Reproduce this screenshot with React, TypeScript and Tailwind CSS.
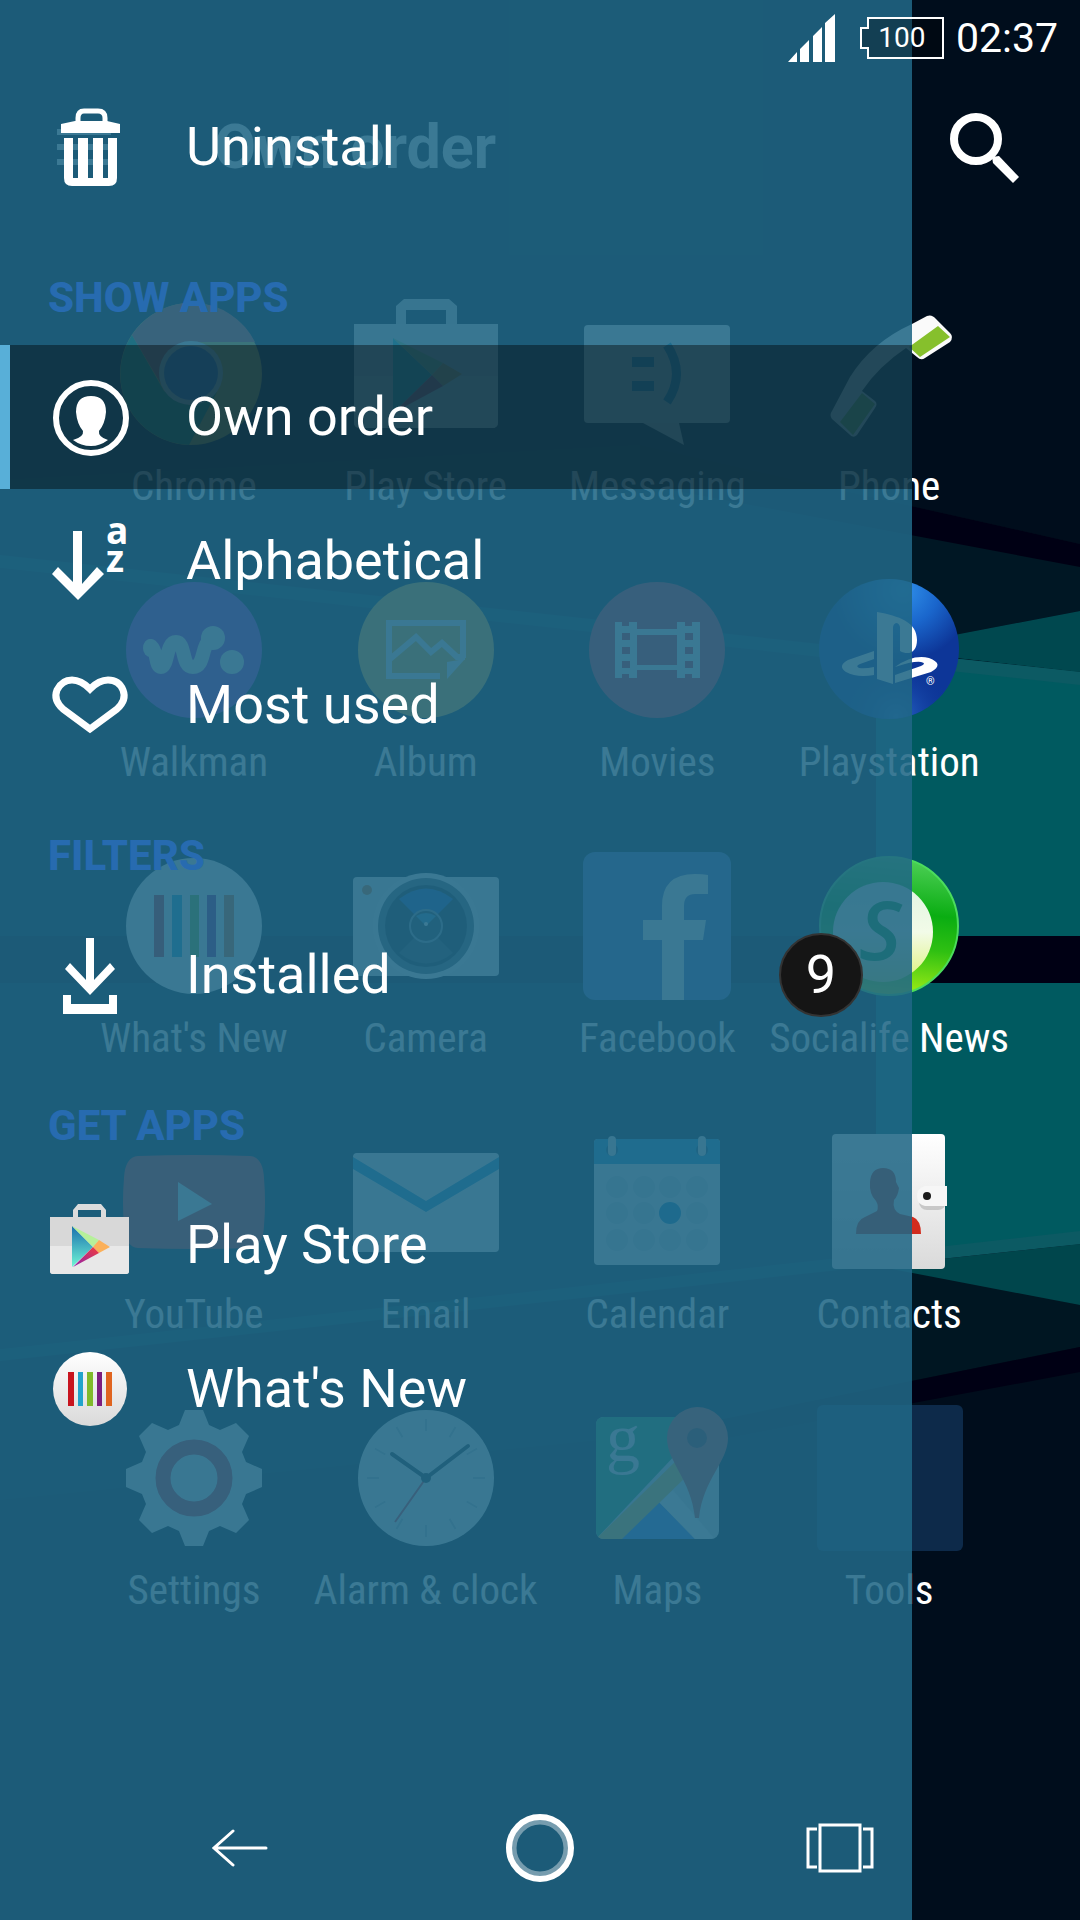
import React, { useState } from "react";

interface AppEntry {
  name: string;
  icon: React.ReactNode;
}

interface MenuEntry {
  label: string;
  icon: React.ReactNode;
  badge?: number;
}

interface MenuSection {
  title?: string;
  items: MenuEntry[];
}

function Wallpaper() {
  return (
    <svg
      className="absolute inset-0 h-full w-full"
      viewBox="0 0 1080 1920"
      preserveAspectRatio="none"
      aria-hidden="true"
    >
      <rect width="1080" height="1920" fill="#000d1c" />
      <path d="M640 445 L1080 544 V611 L876 650 L0 560 V480Z" fill="#001724" />
      <path d="M640 445 L1080 544 V567 L640 484Z" fill="#000014" />
      <path d="M0 1355 L876 1262 L1080 1305 V1347 L640 1436 L0 1500Z" fill="#001622" />
      <path d="M640 1436 L1080 1347 V1372 L640 1454Z" fill="#000014" />
      <path d="M0 568 L876 662 V936 H0Z M0 983 H876 V1256 L0 1349Z" fill="#001a2a" />
      <path d="M876 650 L1080 611 V672 L876 649Z" fill="#00484f" />
      <path d="M876 650 L1080 672 V936 H876Z" fill="#005a60" />
      <path d="M876 983 H1080 V1244 L876 1264Z" fill="#005a60" />
      <path d="M876 1266 L1080 1244 V1305Z" fill="#00464c" />
      <path d="M0 555 L876 650 V663 L0 568Z M0 1349 L876 1254 V1266 L0 1361Z" fill="#00323f" />
      <path d="M876 650 L1080 672 V685 L876 663Z M876 1254 L1080 1231 V1244 L876 1266Z" fill="#0c5a63" />
      <rect y="936" width="1080" height="47" fill="#000014" />
    </svg>
  );
}

function AppIcon({ children }: { children: React.ReactNode }) {
  return (
    <svg className="h-[148px] w-[148px] overflow-visible" viewBox="0 0 148 148" aria-hidden="true">
      {children}
    </svg>
  );
}

function MenuIcon({ children }: { children: React.ReactNode }) {
  return (
    <svg className="h-20 w-20 shrink-0 overflow-visible" viewBox="0 0 80 80" aria-hidden="true">
      {children}
    </svg>
  );
}

const calendarDots = [34, 61, 87, 114].flatMap((x) => [59, 85, 112].map((y) => ({ x, y })));
const clockTicks = [0, 30, 60, 90, 120, 150, 180, 210, 240, 270, 300, 330];

const apps: AppEntry[] = [
  {
    name: "Chrome",
    icon: (
      <AppIcon>
        <circle cx="71" cy="74" r="71" fill="#f2c92c" />
        <path d="M12 35 L44 91 L71 106 L97 92 L69 145 A71 71 0 0 1 12 35Z" fill="#1fa463" />
        <path d="M12 35 A71 71 0 0 1 135 42 H71 A32 32 0 0 0 41 84Z" fill="#e0493e" />
        <circle cx="71" cy="73" r="32" fill="#f4f4f4" />
        <circle cx="71" cy="73" r="27" fill="#4285f4" />
      </AppIcon>
    ),
  },
  {
    name: "Play Store",
    icon: (
      <AppIcon>
        <path d="M44 24 V6 L52 -1 H97 L105 6 V24 H94 V10 H54 V24Z" fill="#dedede" />
        <path d="M2 24 H146 V122 Q146 128 140 128 H8 Q2 128 2 122Z" fill="#e4e4e4" />
        <path d="M2 76 H146 V122 Q146 128 140 128 H8 Q2 128 2 122Z" fill="#f2f2f2" />
        <path d="M41 38 L80 75 L41 113Z" fill="#23c3c0" />
        <path d="M41 38 L91 63 L80 75Z" fill="#a6dc8a" />
        <path d="M91 63 L110 74 L91 86 L80 75Z" fill="#f7a945" />
        <path d="M80 75 L91 86 L41 113Z" fill="#d9344f" />
      </AppIcon>
    ),
  },
  {
    name: "Messaging",
    icon: (
      <AppIcon>
        <rect x="1" y="25" width="146" height="98" rx="4" fill="#f5f5f5" />
        <path d="M60 123 L101 145 L96 123Z" fill="#e9e9e9" />
        <path d="M49 57h22v10h-22z M49 81h22v10h-22z" fill="#1292c8" />
        <path d="M84 45 Q103 74 84 102" fill="none" stroke="#1292c8" strokeWidth="9" />
      </AppIcon>
    ),
  },
  {
    name: "Phone",
    icon: (
      <AppIcon>
        <path
          d="M97 24 L112 16 Q117 14 121 19 L135 33 Q139 37 135 42 L110 58 Q106 61 102 57 L91 48 Q64 66 47 91 L60 101 Q63 104 60 108 L42 135 Q38 139 34 134 L17 119 Q14 115 17 111 L35 77 Q57 42 97 24Z"
          fill="#fafafa"
        />
        <path d="M123 26 L135 37 L105 57 L94 47Z M47 93 L60 104 L38 135 L25 122Z" fill="#86c02c" />
      </AppIcon>
    ),
  },
  {
    name: "Walkman",
    icon: (
      <AppIcon>
        <circle cx="74" cy="74" r="68" fill="#9a35c9" />
        <path
          d="M31 70 C38 76 35 91 41 91 C48 91 46 66 56 66 C66 66 61 91 73 91 C87 91 79 63 96 62"
          fill="none"
          stroke="#f3f3f3"
          strokeWidth="14"
          strokeLinecap="round"
          strokeLinejoin="round"
        />
        <ellipse cx="30" cy="72" rx="7" ry="9" fill="#f3f3f3" />
        <circle cx="93" cy="62" r="12" fill="#f3f3f3" />
        <circle cx="112" cy="86" r="12" fill="#f3f3f3" />
      </AppIcon>
    ),
  },
  {
    name: "Album",
    icon: (
      <AppIcon>
        <circle cx="74" cy="74" r="68" fill="#f0b52a" />
        <path d="M111 82 V47 H37 V100 H88" fill="none" stroke="#f5f5f5" strokeWidth="6" />
        <path d="M38 83 L64 61 L79 76 L90 67 L105 81 H113" fill="none" stroke="#f5f5f5" strokeWidth="6" />
        <path d="M95 103 V86 L113 83Z" fill="#f5f5f5" />
      </AppIcon>
    ),
  },
  {
    name: "Movies",
    icon: (
      <AppIcon>
        <circle cx="74" cy="74" r="68" fill="#da2f3a" />
        <path
          d="M32 46h7v4h7v-4h8v7h40v-7h8v4h7v-4h8v56h-8v-4h-7v4h-8v-8H54v8h-8v-4h-7v4h-7z M54 59v30h40V59z M39 57v7h8v-7z M39 71v7h8v-7z M39 85v7h8v-7z M102 57v7h8v-7z M102 71v7h8v-7z M102 85v7h8v-7z"
          fill="#f5f5f5"
          fillRule="evenodd"
        />
      </AppIcon>
    ),
  },
  {
    name: "Playstation",
    icon: (
      <AppIcon>
        <defs>
          <radialGradient id="psTop" cx="0.6" cy="0.08" r="0.5">
            <stop offset="0" stopColor="#2f90ea" />
            <stop offset="0.5" stopColor="#1a66cc" />
            <stop offset="1" stopColor="#0d3698" />
          </radialGradient>
          <radialGradient id="psBottom" cx="0.55" cy="0.98" r="0.4">
            <stop offset="0" stopColor="#2b6ccc" />
            <stop offset="1" stopColor="#0d3698" stopOpacity="0" />
          </radialGradient>
        </defs>
        <circle cx="74" cy="73" r="70" fill="url(#psTop)" />
        <circle cx="74" cy="73" r="70" fill="url(#psBottom)" />
        <path
          d="M62 36 C84 40 102 46 102 64 C102 76 94 80 85 75 V51 Q84 47 81 47 Q78 48 78 52 V108 L62 103Z"
          fill="#fff"
        />
        <path
          d="M59 75 V83 L45 88 Q40 90 44 92 Q50 93 59 91 V99 Q42 102 31 96 Q22 90 33 84Z M80 91 Q98 78 114 82 Q130 88 116 96 L80 107 V99 L106 90 Q112 87 106 86 Q98 85 80 91Z"
          fill="#fff"
        />
        <text x="111" y="109" fontSize="11" fill="#fff" fontFamily="Roboto, sans-serif">
          ®
        </text>
      </AppIcon>
    ),
  },
  {
    name: "What's New",
    icon: (
      <AppIcon>
        <circle cx="74" cy="74" r="68" fill="#f0f0f0" />
        <path d="M34 43h10v62h-10z" fill="#d0202a" />
        <path d="M52 43h10v62h-10z" fill="#1ba5d0" />
        <path d="M70 43h9v62h-9z" fill="#7dbd2c" />
        <path d="M87 43h9v62h-9z" fill="#85258f" />
        <path d="M104 43h10v62h-10z" fill="#e5682a" />
      </AppIcon>
    ),
  },
  {
    name: "Camera",
    icon: (
      <AppIcon>
        <rect x="1" y="25" width="146" height="99" rx="4" fill="#ececec" />
        <circle cx="15" cy="38" r="5" fill="#e0762c" />
        <circle cx="74" cy="74" r="53" fill="#f5f5f5" />
        <circle cx="74" cy="74" r="48" fill="#55606a" />
        <circle cx="74" cy="74" r="41" fill="#1d262d" />
        <path d="M74 74 L47 47 Q74 26 101 47Z" fill="#1e55b4" />
        <path d="M74 74 L47 101 Q74 122 101 101Z" fill="#39434b" />
        <circle cx="74" cy="74" r="16" fill="#2a3942" stroke="#8795a0" strokeWidth="2" />
        <path d="M74 74 L64 64 Q74 58 84 64Z" fill="#3a88b8" />
        <circle cx="74" cy="72" r="2" fill="#fff" />
      </AppIcon>
    ),
  },
  {
    name: "Facebook",
    icon: (
      <AppIcon>
        <rect width="148" height="148" rx="12" fill="#4a6cb8" />
        <path
          d="M79 148V88H60V68H79V54Q79 22 112 22Q120 22 125 23V42H112Q101 42 101 54V68H123L120 88H101V148Z"
          fill="#f5f5f5"
        />
      </AppIcon>
    ),
  },
  {
    name: "Socialife News",
    icon: (
      <AppIcon>
        <defs>
          <linearGradient id="lifeRing" x1="0.6" y1="0" x2="0.5" y2="1">
            <stop offset="0" stopColor="#4fd058" />
            <stop offset="0.4" stopColor="#0aad12" />
            <stop offset="0.65" stopColor="#2fc012" />
            <stop offset="1" stopColor="#a5f016" />
          </linearGradient>
          <linearGradient id="lifeFace" x1="0" y1="0" x2="0" y2="1">
            <stop offset="0" stopColor="#dff5e2" />
            <stop offset="0.5" stopColor="#f2fbe8" />
            <stop offset="1" stopColor="#dff27a" />
          </linearGradient>
        </defs>
        <circle cx="74" cy="74" r="69" fill="url(#lifeRing)" stroke="#4bdc5c" strokeWidth="2" />
        <circle cx="68" cy="80" r="50" fill="url(#lifeFace)" />
        <text
          x="44"
          y="108"
          fontSize="82"
          fontWeight="600"
          fontStyle="italic"
          fill="#0b9a2e"
          fontFamily="'Open Sans', sans-serif"
        >
          S
        </text>
      </AppIcon>
    ),
  },
  {
    name: "YouTube",
    icon: (
      <AppIcon>
        <path
          d="M18 28 Q74 26 130 28 Q143 29 144 50 Q146 74 144 98 Q143 119 130 120 Q74 122 18 120 Q5 119 4 98 Q2 74 4 50 Q5 29 18 28Z"
          fill="#e62f27"
        />
        <path d="M58 54 L92 76 L58 93Z" fill="#f5f5f5" />
      </AppIcon>
    ),
  },
  {
    name: "Email",
    icon: (
      <AppIcon>
        <rect x="1" y="25" width="146" height="99" rx="4" fill="#efefef" />
        <path d="M1 29 L74 73 L147 29 V41 L74 84 L1 41Z" fill="#1a92cc" />
      </AppIcon>
    ),
  },
  {
    name: "Calendar",
    icon: (
      <AppIcon>
        <rect x="11" y="11" width="126" height="126" rx="4" fill="#efefef" />
        <path d="M11 36 V15 Q11 11 15 11 H133 Q137 11 137 15 V36Z" fill="#1a92cc" />
        <circle cx="29" cy="22" r="6" fill="#10557c" />
        <circle cx="119" cy="22" r="6" fill="#10557c" />
        <rect x="25" y="8" width="8" height="20" rx="4" fill="#e0e0e0" />
        <rect x="115" y="8" width="8" height="20" rx="4" fill="#e0e0e0" />
        {calendarDots.map(({ x, y }) => (
          <circle key={`${x}-${y}`} cx={x} cy={y} r="11" fill={x === 87 && y === 85 ? "#1286c4" : "#d2d8dc"} />
        ))}
      </AppIcon>
    ),
  },
  {
    name: "Contacts",
    icon: (
      <AppIcon>
        <defs>
          <linearGradient id="bookCover" x1="0" y1="0" x2="0" y2="1">
            <stop offset="0" stopColor="#ffffff" />
            <stop offset="1" stopColor="#dadada" />
          </linearGradient>
        </defs>
        <rect x="17" y="6" width="113" height="135" rx="4" fill="url(#bookCover)" />
        <path
          d="M41 106 Q41 92 50 89 L62 83 Q64 78 61 73 Q54 66 55 54 Q56 40 68 40 Q81 40 81 54 L84 60 Q83 68 79 72 Q77 82 85 86 L98 89 Q106 92 106 106Z"
          fill="#d22c1e"
        />
        <rect x="104" y="64" width="27" height="18" rx="8" fill="#000" opacity="0.15" />
        <path d="M132 58 H110 Q102 60 102 68 Q102 76 110 78 H132Z" fill="#f6f6f6" />
        <circle cx="112" cy="68" r="4" fill="#1a1a1a" />
      </AppIcon>
    ),
  },
  {
    name: "Settings",
    icon: (
      <AppIcon>
        <path
          d="M65 6 H83 L89 21 L100 26 L116 19 L129 32 L122 48 L126 58 L142 65 V83 L126 90 L122 100 L129 116 L116 129 L100 122 L89 127 L83 142 H65 L59 127 L48 122 L32 129 L19 116 L26 100 L22 90 L6 83 V65 L22 58 L26 48 L19 32 L32 19 L48 26 L59 21Z"
          fill="#efefef"
        />
        <circle cx="74" cy="74" r="31" fill="none" stroke="#d8303a" strokeWidth="15" />
      </AppIcon>
    ),
  },
  {
    name: "Alarm & clock",
    icon: (
      <AppIcon>
        <circle cx="74" cy="74" r="68" fill="#efefef" />
        {clockTicks.map((angle) => (
          <path key={angle} d="M74 15V27" stroke="#bcc4c8" strokeWidth="2" transform={`rotate(${angle} 74 74)`} />
        ))}
        <path d="M40 50 L74 74 L116 42" fill="none" stroke="#25323a" strokeWidth="4" strokeLinecap="round" />
        <path d="M74 74 L43 118" stroke="#e03038" strokeWidth="2" />
        <circle cx="74" cy="74" r="5" fill="#25323a" />
      </AppIcon>
    ),
  },
  {
    name: "Maps",
    icon: (
      <AppIcon>
        <rect x="13" y="13" width="123" height="122" rx="8" fill="#e4e4e4" />
        <path d="M21 13 H128 L15 133 Q13 130 13 127 V21 Q13 13 21 13Z" fill="#2ba55d" />
        <path d="M76 98 L112 135 H38Z" fill="#4285f4" />
        <path d="M76 98 L90 86 L131 134 Q128 135 126 135 H112Z" fill="#f8f8f8" />
        <path d="M15 133 L96 54 L108 68 L39 135 H21 Q17 135 15 133Z" fill="#f2ca45" />
        <text x="23" y="57" fontSize="68" fill="#f2f2f2" fontFamily="'Liberation Serif', serif">
          g
        </text>
        <path d="M114 3 A31 31 0 0 1 145 34 C145 58 120 75 116 114 H112 C108 75 84 58 84 34 A31 31 0 0 1 114 3Z" fill="#dd4b3e" />
        <circle cx="114" cy="34" r="10" fill="#7c2a2a" />
      </AppIcon>
    ),
  },
  {
    name: "Tools",
    icon: (
      <AppIcon>
        <rect x="2" y="1" width="146" height="146" rx="6" fill="#0d2a4a" />
      </AppIcon>
    ),
  },
];

const sections: MenuSection[] = [
  {
    items: [
      {
        label: "Uninstall",
        icon: (
          <MenuIcon>
            <path d="M28 15 V11 Q28 4 34 4 H48 Q55 4 55 11 V15" fill="none" stroke="#fff" strokeWidth="5" />
            <path d="M11 17 L25 14 H57 L70 17 V26 H11Z" fill="#fff" />
            <path
              d="M14 31 H67 V71 Q67 79 59 79 H22 Q14 79 14 71Z M23 31 V71 H28 V31Z M38 31 V71 H43 V31Z M53 31 V71 H58 V31Z"
              fill="#fff"
              fillRule="evenodd"
            />
          </MenuIcon>
        ),
      },
    ],
  },
  {
    title: "Show apps",
    items: [
      {
        label: "Own order",
        icon: (
          <MenuIcon>
            <circle cx="41" cy="41" r="35" fill="none" stroke="#fff" strokeWidth="6" />
            <path
              d="M41 19 Q56 19 56 35 Q55 47 49 54 Q48 60 58 63 Q50 69 41 69 Q31 69 23 63 Q34 60 33 54 Q27 47 26 35 Q26 19 41 19Z"
              fill="#fff"
            />
          </MenuIcon>
        ),
      },
      {
        label: "Alphabetical",
        icon: (
          <MenuIcon>
            <path d="M23 10 H32 V63 L47 46 L54 53 L28 79 L2 53 L8 46 L23 61Z" fill="#fff" />
            <text x="56" y="23" fontSize="37" fontWeight="700" fill="#fff" fontFamily="'Open Sans', sans-serif">
              a
            </text>
            <text x="56" y="51" fontSize="37" fontWeight="700" fill="#fff" fontFamily="'Open Sans', sans-serif">
              z
            </text>
          </MenuIcon>
        ),
      },
      {
        label: "Most used",
        icon: (
          <MenuIcon>
            <path
              d="M40 64 L13 44 Q3 35 7 25 Q12 15 22 15 Q31 15 40 24 Q49 15 58 15 Q69 15 73 25 Q77 35 67 44Z"
              fill="none"
              stroke="#fff"
              strokeWidth="7"
            />
          </MenuIcon>
        ),
      },
    ],
  },
  {
    title: "Filters",
    items: [
      {
        label: "Installed",
        badge: 9,
        icon: (
          <MenuIcon>
            <path d="M36 3 H44 V45 L60 28 L65 34 L40 60 L15 34 L20 28 L36 45Z" fill="#fff" />
            <path d="M13 60 H21 V69 H59 V60 H67 V79 H13Z" fill="#fff" />
          </MenuIcon>
        ),
      },
    ],
  },
  {
    title: "Get apps",
    items: [
      {
        label: "Play Store",
        icon: (
          <MenuIcon>
            <defs>
              <linearGradient id="playBlue" x1="0" y1="0" x2="0" y2="1">
                <stop offset="0" stopColor="#1a6fae" />
                <stop offset="1" stopColor="#6ff5d5" />
              </linearGradient>
              <linearGradient id="playRed" x1="0" y1="1" x2="1" y2="0">
                <stop offset="0" stopColor="#8d22b0" />
                <stop offset="1" stopColor="#f23c3c" />
              </linearGradient>
            </defs>
            <path d="M23 13 V5 L28 -1 H51 L56 5 V13 H51 V5 H28 V13Z" fill="#dcdcdc" />
            <path d="M0 12 H79 V66 Q79 69 76 69 H3 Q0 69 0 66Z" fill="#d8d8d8" />
            <path d="M0 41 H79 V66 Q79 69 76 69 H3 Q0 69 0 66Z" fill="#e8e8e8" />
            <path d="M22 21 L43 42 L22 62Z" fill="url(#playBlue)" />
            <path d="M22 21 L49 35 L43 42Z" fill="#b6f09a" />
            <path d="M49 35 L60 42 L49 48 L43 42Z" fill="#fbb05a" />
            <path d="M43 42 L49 48 L23 62Z" fill="url(#playRed)" />
          </MenuIcon>
        ),
      },
      {
        label: "What's New",
        icon: (
          <MenuIcon>
            <defs>
              <linearGradient id="newDisc" x1="0" y1="0" x2="0" y2="1">
                <stop offset="0" stopColor="#ffffff" />
                <stop offset="1" stopColor="#dadada" />
              </linearGradient>
            </defs>
            <circle cx="40" cy="40" r="37" fill="url(#newDisc)" />
            <path d="M18 23h6v34h-6z" fill="#c8151f" />
            <path d="M28 23h5v34h-5z" fill="#22a4cb" />
            <path d="M37 23h6v34h-6z" fill="#80ba2b" />
            <path d="M47 23h5v34h-5z" fill="#7d1d7f" />
            <path d="M56 23h6v34h-6z" fill="#e0641f" />
          </MenuIcon>
        ),
      },
    ],
  },
];

function StatusBar() {
  return (
    <header className="relative z-20 flex h-[76px] items-center justify-end pr-[22px]">
      <svg className="mr-6 h-12 w-12" viewBox="0 0 48 48" role="img" aria-label="Signal strength">
        <path d="M0 48 L9 38 V48Z M12 48 V35 L21 26 V48Z M25 48 V22 L34 13 V48Z M37 48 V9 L47 0 V48Z" fill="#fff" />
      </svg>
      <div className="relative mr-3 flex h-[42px] w-[84px] items-center justify-center">
        <svg className="absolute inset-0 h-full w-full" viewBox="0 0 84 42" aria-hidden="true">
          <path d="M8 1 H83 V41 H8 V31 H1 V11 H8Z" fill="#000" fillOpacity="0.3" stroke="#fff" strokeWidth="2" />
        </svg>
        <span className="relative text-[28px] leading-8">100</span>
      </div>
      <time className="text-[41px] leading-none">02:37</time>
    </header>
  );
}

function HomeScreen() {
  return (
    <main className="relative flex-1">
      <div className="flex h-[142px] items-center pr-[59px] pl-[57px]">
        <button type="button" aria-label="Menu" className="flex w-[54px] flex-col gap-[9px]">
          <span className="h-[6px] bg-white" />
          <span className="h-[6px] bg-white" />
          <span className="h-[6px] bg-white" />
        </button>
        <h1 className="ml-[103px] text-[61px] leading-none font-bold">Own order</h1>
        <button type="button" aria-label="Search" className="ml-auto">
          <svg className="h-[72px] w-[72px]" viewBox="0 0 72 72" aria-hidden="true">
            <circle cx="27" cy="28" r="22" fill="none" stroke="#fff" strokeWidth="8" />
            <path d="M43 46 L50 45 L70 66 L64 72 L44 52Z" fill="#fff" />
          </svg>
        </button>
      </div>
      <div className="grid auto-rows-[276px] grid-cols-4 pt-[82px] pr-[75px] pl-[78px]">
        {apps.map((app) => (
          <button key={app.name} type="button" className="flex flex-col items-center gap-4">
            {app.icon}
            <span className="font-['Roboto_Condensed',Roboto,sans-serif] text-[41px] leading-[44px] whitespace-nowrap">
              {app.name}
            </span>
          </button>
        ))}
      </div>
    </main>
  );
}

function Drawer() {
  const [active, setActive] = useState("Own order");

  return (
    <aside className="absolute inset-y-0 left-0 z-10 w-[84.44%] bg-[#206785]/88 pt-[75px]">
      {sections.map((section) => (
        <section key={section.items[0].label}>
          {section.title && (
            <h2 className="flex h-[126px] items-center pt-8 pl-12 text-[42px] leading-none font-extrabold text-[#276bb0] uppercase">
              {section.title}
            </h2>
          )}
          {section.items.map((item) => (
            <button
              key={item.label}
              type="button"
              onClick={() => setActive(item.label)}
              className={`flex h-36 w-full items-center border-l-[10px] pr-[49px] pl-10 text-left text-[54px] leading-none ${
                active === item.label ? "border-[#58afd8] bg-black/40" : "border-transparent"
              }`}
            >
              {item.icon}
              <span className="ml-14">{item.label}</span>
              {item.badge && (
                <span className="ml-auto flex h-[84px] w-[84px] items-center justify-center rounded-full border-2 border-[#333333] bg-[#151515]">
                  {item.badge}
                </span>
              )}
            </button>
          ))}
        </section>
      ))}
    </aside>
  );
}

function NavBar() {
  return (
    <footer className="relative z-20 grid h-36 grid-cols-3 items-center justify-items-center px-[90px]">
      <button type="button" aria-label="Back">
        <svg className="h-10 w-14" viewBox="0 0 56 40" aria-hidden="true">
          <path d="M21 3 L2 20 L21 37 M2 20 H54" fill="none" stroke="#fff" strokeWidth="3" strokeLinecap="round" />
        </svg>
      </button>
      <button type="button" aria-label="Home">
        <svg className="h-[68px] w-[68px]" viewBox="0 0 68 68" aria-hidden="true">
          <circle cx="34" cy="34" r="26" fill="none" stroke="#fff" strokeOpacity="0.4" strokeWidth="5" />
          <circle cx="34" cy="34" r="31" fill="none" stroke="#fff" strokeWidth="6" />
        </svg>
      </button>
      <button type="button" aria-label="Recent apps">
        <svg className="h-[50px] w-[68px]" viewBox="0 0 68 50" aria-hidden="true">
          <path d="M14 2h40v46H14z" fill="none" stroke="#fff" strokeWidth="3" />
          <path d="M11 6H2V44H11 M57 6H66V44H57" fill="none" stroke="#fff" strokeWidth="3" />
        </svg>
      </button>
    </footer>
  );
}

export default function App() {
  return (
    <div className="relative flex min-h-screen flex-col overflow-hidden bg-[#000d1c] font-[Roboto,sans-serif] text-white">
      <Wallpaper />
      <StatusBar />
      <HomeScreen />
      <Drawer />
      <NavBar />
    </div>
  );
}
